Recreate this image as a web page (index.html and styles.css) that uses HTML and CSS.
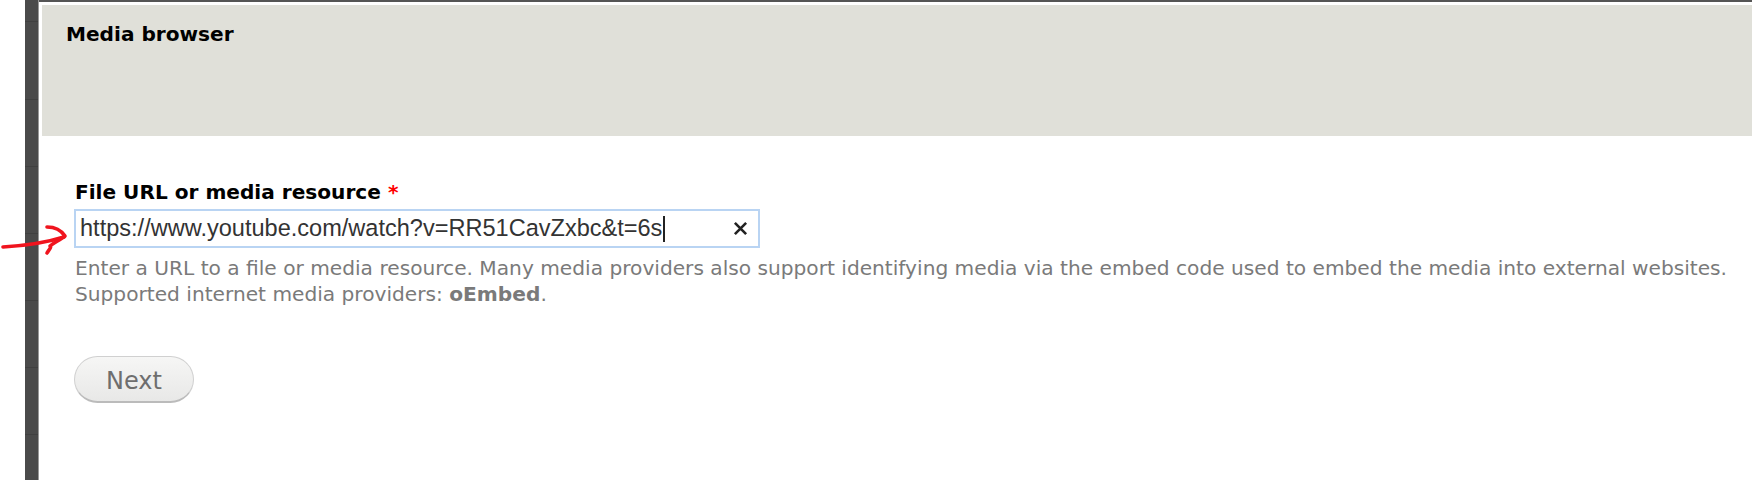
FILE: index.html
```html
<!DOCTYPE html>
<html lang="en">
<head>
  <meta charset="UTF-8" />
  <title>Media browser</title>
  <link rel="stylesheet" href="styles.css">
</head>
<body>
  <div class="page">
    <div class="rail"></div>
    <div class="dialog">
      <div class="dialog-header">
        <h2>Media browser</h2>
      </div>
      <form class="dialog-body">
        <label class="field-label">File URL or media resource <span class="required">*</span></label>
        <div class="url-input">
          <span class="url-text">https://www.youtube.com/watch?v=RR51CavZxbc&amp;t=6s</span>
          <span class="caret"></span>
          <svg class="clear-icon" viewBox="0 0 12 12" width="15" height="15">
            <path d="M1.5 1.5 L10.5 10.5 M10.5 1.5 L1.5 10.5" stroke="#222" stroke-width="2.1" fill="none" />
          </svg>
        </div>
        <p class="field-desc">
          Enter a URL to a file or media resource. Many media providers also support identifying media via the embed code used to embed the media into external websites.<br>
          Supported internet media providers: <strong>oEmbed</strong>.
        </p>
        <button type="button" class="next-btn">Next</button>
      </form>
    </div>
  </div>

  <!-- red arrow scribbled over the screenshot -->
  <svg class="scribble" viewBox="0 0 80 40" width="80" height="40">
    <path d="M3 27 C20 26 45 23 64 17" stroke="#f0141e" stroke-width="3.6" fill="none" stroke-linecap="round" />
    <path d="M47 7 C54 7 61 10 65 16 C60 20 53 23 50 26 C52 27 48 31 47 33" stroke="#f0141e" stroke-width="3.6" fill="none" stroke-linecap="round" stroke-linejoin="round" />
  </svg>
</body>
</html>
```

FILE: styles.css
```css
* {
  box-sizing: border-box;
  padding: 0;
  margin: 0;
}

html,
body {
  height: 100%;
  overflow: hidden;
  background-color: #fff;
}

body {
  font-family: "DejaVu Sans", Verdana, sans-serif;
  position: relative;
}

.page {
  display: flex;
  height: 480px;
  padding-left: 25px;
}

.rail {
  width: 14px;
  flex-shrink: 0;
  background-color: #4a4a4a;
  background-image: repeating-linear-gradient(to bottom, transparent 0, transparent 66px, #404040 66px, #404040 67px);
  background-position: 0 33px;
  border-right: 1px solid #999;
}

.dialog {
  flex: 1;
  border-top: 2px solid #555;
  padding-top: 3px;
  padding-left: 3px;
}

.dialog-header {
  background-color: #e0e0d9;
  height: 131px;
  padding: 17px 0 0 24px;
}

.dialog-header h2 {
  font-size: 20.1px;
  line-height: 24px;
  font-weight: bold;
  color: #000;
}

.dialog-body {
  padding: 44px 0 0 32px;
}

.field-label {
  display: block;
  font-size: 20.1px;
  line-height: 24px;
  font-weight: bold;
  color: #000;
  margin-left: 1px;
  margin-bottom: 5px;
}

.required {
  color: #f00;
}

.url-input {
  display: flex;
  align-items: center;
  width: 686px;
  height: 39px;
  border: 2px solid #b9d4f3;
  padding-left: 4px;
  background-color: #fff;
}

.url-text {
  font-family: "Liberation Sans", Arial, sans-serif;
  font-size: 23.55px;
  color: #333;
  white-space: nowrap;
}

.caret {
  width: 2px;
  height: 26px;
  margin-left: 1px;
  background-color: #222;
}

.clear-icon {
  margin-left: auto;
  margin-right: 10px;
}

.field-desc {
  font-size: 20.17px;
  line-height: 25.5px;
  color: #7a7a7a;
  margin-top: 8px;
  margin-left: 1px;
  white-space: nowrap;
}

.next-btn {
  display: block;
  width: 120px;
  height: 47px;
  margin-top: 49px;
  padding-top: 3px;
  border: 1px solid #d0d0d0;
  border-bottom: 2px solid #bbb;
  border-radius: 24px;
  background: linear-gradient(to bottom, #f6f6f5, #e8e8e7);
  color: #6e6e6e;
  font-family: "DejaVu Sans", Verdana, sans-serif;
  font-size: 24px;
}

.scribble {
  position: absolute;
  left: 0;
  top: 220px;
}
```
